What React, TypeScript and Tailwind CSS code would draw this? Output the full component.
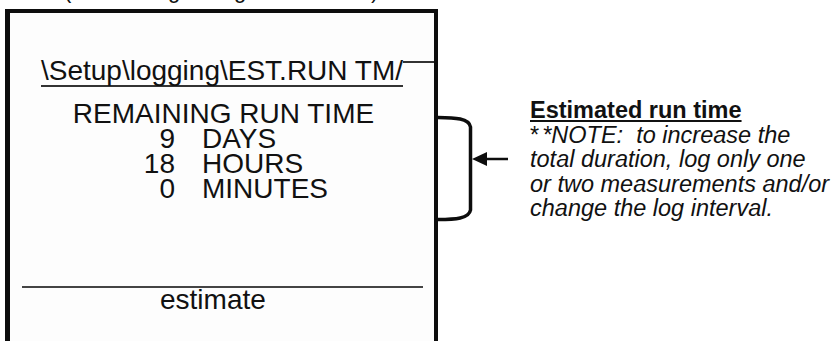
import React from "react";

export default function App() {
  const font = { fontFamily: '"Liberation Sans", Arial, sans-serif' };
  return (
    <div className="w-[838px] h-[341px] overflow-hidden bg-white text-[#111] flex flex-col" style={font}>
      <div className="h-[9px] overflow-hidden shrink-0">
        <div className="mt-[-20px] pl-[64px] text-[22px] leading-[22px] whitespace-nowrap">
          (while using a long interval time)
        </div>
      </div>
      <div className="flex flex-row items-start">
        <div className="ml-[5px] w-[433px] h-[340px] shrink-0 border-t-[4px] border-l-[5px] border-r-[4px] border-b-0 border-[#0d0d0d] bg-[#fdfdfd] flex flex-col">
          <div className="pt-[44px] flex justify-center">
            <span className="relative inline-block text-[28px] leading-[28px] border-b-2 border-[#333]">
              \Setup\logging\EST.RUN TM/
              <span className="absolute left-full top-[4px] h-[2px] w-[31px] bg-[#333]" />
            </span>
          </div>
          <div className="mt-[14px] text-center text-[28px] leading-[25px] pl-[3px]">REMAINING RUN TIME</div>
          <div className="grid grid-cols-[165px_auto] gap-x-[27px] text-[28px] leading-[25px]">
            <div className="text-right">9</div>
            <div>DAYS</div>
            <div className="text-right">18</div>
            <div>HOURS</div>
            <div className="text-right">0</div>
            <div>MINUTES</div>
          </div>
          <div className="mt-[85px] h-[2px] bg-[#444] ml-[12px] mr-[11px]" />
          <div className="pl-[150px] text-[28px] leading-[24px]">estimate</div>
        </div>
        <svg width="74" height="332" viewBox="0 0 74 332" className="shrink-0">
          <path
            d="M-2 108.5 C 18 108.5, 31 109.5, 32.5 118 L 32.5 201 C 31 209.5, 18 210.5, -2 210.5"
            fill="none"
            stroke="#0d0d0d"
            strokeWidth="3.5"
          />
          <polygon points="34,150 49,143 49,157" fill="#0d0d0d" />
          <line x1="48" y1="150" x2="70" y2="150" stroke="#0d0d0d" strokeWidth="2.5" />
        </svg>
        <div className="ml-[18px] mt-[89px] text-[23.5px] leading-[24.5px] whitespace-nowrap">
          <div className="font-bold underline decoration-2 underline-offset-[2px]">Estimated run time</div>
          <div className="whitespace-pre">
            <span>*</span>
            <span className="italic ml-[3px]">{"*NOTE:  to increase the"}</span>
          </div>
          <div className="italic">total duration, log only one</div>
          <div className="italic">or two measurements and/or</div>
          <div className="italic">change the log interval.</div>
        </div>
      </div>
    </div>
  );
}
